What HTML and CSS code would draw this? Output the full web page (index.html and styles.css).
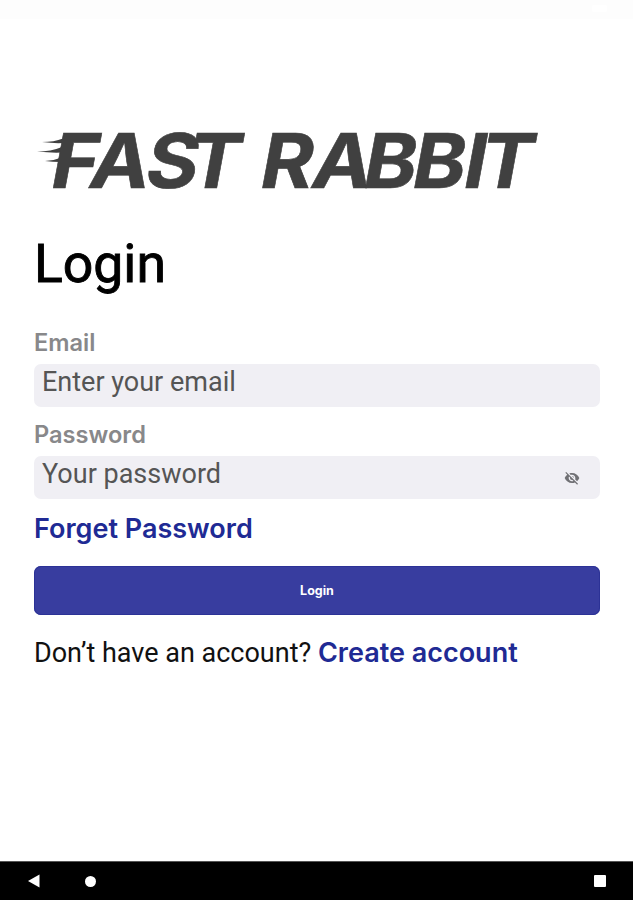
FILE: index.html
```html
<!DOCTYPE html>
<html lang="en">
<head>
  <meta charset="UTF-8">
  <title>Login</title>
  <link rel="stylesheet" href="styles.css">
</head>
<body>

  <header class="status"><span class="status-icon"></span></header>

  <main>
    <svg class="logo" width="560" height="112" viewBox="34 104 560 112" role="img" aria-label="Fast Rabbit">
      <!-- speed lines -->
      <g fill="#404040">
        <path d="M42 142 Q54 142 63 138.500V143Q54 143.500 42 142Z"/>
        <path d="M37 151.500Q51 151.500 62 147V152.500Q51 153 37 151.500Z"/>
        <path d="M45 161Q53 161 60 158V162Q53 162 45 161Z"/>
      </g>
      <g transform="translate(0 188) skewX(-10.500) scale(1.060 1)">
        <text class="logo-text" x="45.300 81.600 134.400 173.600 242.700 291.200 339.800 386.200 434.400 449.800">FASTRABBIT</text>
      </g>
    </svg>

    <h1>Login</h1>

    <form>
      <label for="email">Email</label>
      <div class="field"><input type="email" id="email" placeholder="Enter your email"></div>

      <label for="password">Password</label>
      <div class="field">
        <input type="password" id="password" placeholder="Your password">
        <svg class="eye" width="16" height="16" viewBox="0 0 24 24" fill="#707074"><path d="M12 7c2.760 0 5 2.240 5 5 0 .650-.130 1.260-.360 1.830l2.920 2.920c1.510-1.260 2.700-2.890 3.430-4.750-1.730-4.390-6-7.500-11-7.500-1.400 0-2.740.250-3.980.700l2.160 2.160C10.740 7.130 11.350 7 12 7zM2 4.270l2.280 2.280.460.460C3.080 8.300 1.780 10.020 1 12c1.730 4.390 6 7.500 11 7.500 1.550 0 3.030-.300 4.380-.840l.420.420L19.730 22 21 20.730 3.270 3 2 4.270zM7.530 9.800l1.550 1.550c-.050.210-.080.430-.080.650 0 1.660 1.340 3 3 3 .220 0 .440-.030.650-.080l1.550 1.550c-.670.330-1.410.530-2.200.530-2.760 0-5-2.240-5-5 0-.790.200-1.530.530-2.200zm4.310-.780l3.150 3.150.020-.160c0-1.660-1.340-3-3-3l-.170.010z"/></svg>
      </div>

      <a class="forget">Forget Password</a>
      <button type="button">Login</button>
    </form>

    <p class="signup">Don’t have an account? <a>Create account</a></p>
  </main>

  <footer class="navbar">
    <svg width="12" height="14" viewBox="0 0 12 14" fill="#fff"><path d="M0 7L11.500 .500V13.500Z"/></svg>
    <span class="home"></span>
    <span class="recent"></span>
  </footer>

</body>
</html>
```

FILE: styles.css
```css
* { box-sizing: border-box; }
body { margin: 0; height: 900px; display: flex; flex-direction: column; background: #fff; font-family: Roboto, sans-serif; color: #111; overflow: hidden; }
.status { height: 19px; background: #fdfdfd; display: flex; justify-content: flex-end; padding: 5px 26px 0 0; }
.status-icon { width: 15px; height: 7px; background: #fff; border-radius: 2px; }
main { flex: 1; padding: 85px 33px 0 34px; }
.logo { display: block; overflow: visible; }
.logo-text { font-family: Inter, sans-serif; font-size: 75.6px; font-weight: 700; fill: #404040; stroke: #404040; stroke-width: .6px; }
h1 { margin: 16px 0 0; font-size: 53.5px; line-height: 64px; font-weight: 400; color: #000; -webkit-text-stroke: .9px #000; }
form { display: flex; flex-direction: column; margin-top: 33px; }
label { font-family: Inter, sans-serif; font-size: 23.6px; font-weight: 600; line-height: 28px; height: 35px; color: #88888a; }
.field { display: flex; height: 43px; background: #f0eff4; border-radius: 7px; margin-bottom: 14px; padding: 0 20px 0 8px; }
input { flex: 1; min-width: 0; height: 36px; border: 0 none; padding: 0; background: none; font: 27px Roboto, sans-serif; }
input::placeholder { color: #555; opacity: 1; }
.eye { margin-top: 14px; }
a { font-family: Inter, sans-serif; font-weight: 600; color: #202a94; }
.forget { font-size: 27px; line-height: 32px; }
button { height: 49px; margin-top: 21px; border: 0 none; border-radius: 7px; background: #383d9f; box-shadow: inset 0 0 0 1px #2c3296; color: #fff; font: 700 12.5px Inter, sans-serif; }
.signup { margin: 20px 0 0; font-size: 27px; line-height: 36px; white-space: nowrap; }
.navbar { height: 39px; background: #000; border-top: 1px solid #555; display: flex; align-items: center; padding: 0 27px 0 28px; }
.home { width: 11px; height: 11px; border-radius: 50%; background: #fff; margin-left: 45px; }
.recent { width: 12px; height: 12px; border-radius: 1px; background: #fff; margin-left: auto; }
```
